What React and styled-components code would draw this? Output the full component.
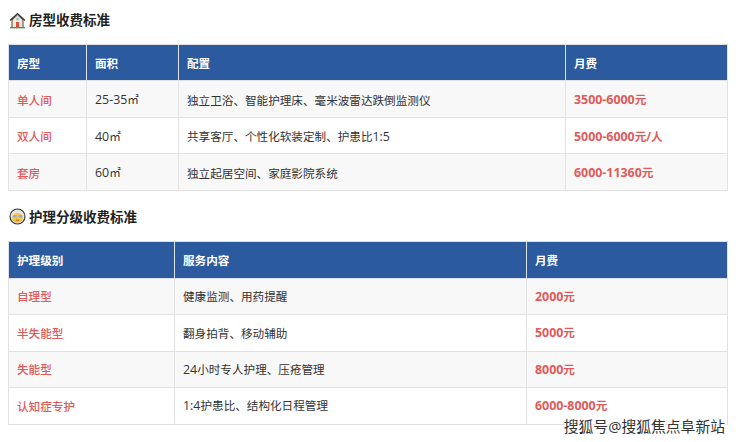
import React from "react";
import styled, { createGlobalStyle } from "styled-components";

const Global = createGlobalStyle`
  html, body { margin: 0; padding: 0; background: #fff; }
  body { font-family: "Open Sans", "Noto Sans CJK SC", sans-serif; }
`;
const Page = styled.div`
  position: relative;
  width: 740px;
  height: 442px;
  overflow: hidden;
  padding: 10px 12px 0 8px;
  box-sizing: border-box;
`;
const Heading = styled.h3`
  display: flex;
  align-items: center;
  gap: 3px;
  height: 20px;
  margin: 0 0 14px 1px;
  font-size: 13.5px;
  font-weight: 700;
  color: #222;
  line-height: 20px;
`;
const SecondHeading = styled(Heading)`
  margin-top: 16px;
  margin-bottom: 14px;
`;
const Table = styled.table`
  width: 719px;
  table-layout: fixed;
  border-collapse: collapse;
  font-size: 11.6px;
  color: #333;
`;
const Th = styled.th`
  height: ${(p) => p.$height}px;
  padding: 0 8px;
  box-sizing: border-box;
  background: #2b5a9e;
  border: 1px solid #dde1e6;
  color: #fff;
  font-weight: 700;
  text-align: left;
`;
const Row = styled.tr`
  background: ${(p) => (p.$odd ? "#f8f8f8" : "#fff")};
`;
const Td = styled.td`
  height: 36.5px;
  padding: ${(p) => p.$nudge}px 8px 0;
  box-sizing: border-box;
  border: 1px solid #e2e2e2;
  color: ${(p) => (p.$accent ? "#e05a5a" : "#333")};
  font-weight: ${(p) => p.$weight};
  white-space: nowrap;
`;
const Latin = styled.span`
  font-size: 12.4px;
`;
const Watermark = styled.div`
  position: absolute;
  right: 15px;
  bottom: 6px;
  font-size: 14.8px;
  line-height: 20px;
  color: #333;
  text-shadow: 1px 0 0 #fff, -1px 0 0 #fff, 0 1px 0 #fff, 0 -1px 0 #fff, 1px 1px 0 #fff, -1px -1px 0 #fff;
`;

const HouseIcon = () => (
  <svg width="17" height="17" viewBox="0 0 17 17" aria-hidden="true">
    <path d="M1 8.5 8.5 1.5 16 8.5" fill="#f4f1ec" stroke="#333" strokeWidth="1.2" />
    <path d="M3 8v7.5h11V8L8.5 3z" fill="#f6e7d8" stroke="#444" strokeWidth="1" />
    <rect x="7" y="10" width="3" height="5.5" fill="#d9503f" />
    <rect x="1" y="15" width="15" height="1.4" fill="#3f9e4d" />
    <circle cx="8.5" cy="7" r="1.2" fill="#6cb6e0" />
  </svg>
);
const GrannyIcon = () => (
  <svg width="17" height="17" viewBox="0 0 17 17" aria-hidden="true">
    <circle cx="8.5" cy="8.5" r="7.5" fill="#e9e6e0" stroke="#333" strokeWidth="1.1" />
    <ellipse cx="8.5" cy="10" rx="5.4" ry="5" fill="#f7c34b" />
    <rect x="3.6" y="7" width="4" height="2.6" rx="1" fill="#8fb2d8" />
    <rect x="9.4" y="7" width="4" height="2.6" rx="1" fill="#8fb2d8" />
    <path d="M6.8 12.2h3.4" stroke="#b5651d" strokeWidth="1" />
  </svg>
);

const rooms = [
  ["单人间", "25-35㎡", "独立卫浴、智能护理床、毫米波雷达跌倒监测仪", "3500-6000元"],
  ["双人间", "40㎡", "共享客厅、个性化软装定制、护患比1:5", "5000-6000元/人"],
  ["套房", "60㎡", "独立起居空间、家庭影院系统", "6000-11360元"],
];
const care = [
  ["自理型", "健康监测、用药提醒", "2000元"],
  ["半失能型", "翻身拍背、移动辅助", "5000元"],
  ["失能型", "24小时专人护理、压疮管理", "8000元"],
  ["认知症专护", "1:4护患比、结构化日程管理", "6000-8000元"],
];

const Mixed = ({ text }) =>
  text.split(/([0-9:\-]+)/).map((part, i) => (i % 2 ? <Latin key={i}>{part}</Latin> : part));

const PriceTable = ({ widths, head, rows, headHeight, nudge }) => (
  <Table>
    <colgroup>
      {widths.map((w) => (
        <col key={w} width={w} />
      ))}
    </colgroup>
    <thead>
      <tr>
        {head.map((h) => (
          <Th key={h} $height={headHeight}>
            {h}
          </Th>
        ))}
      </tr>
    </thead>
    <tbody>
      {rows.map((r, i) => (
        <Row key={r[0]} $odd={i % 2 === 0}>
          {r.map((c, j) => {
            const last = j === r.length - 1;
            return (
              <Td key={j} $nudge={nudge} $accent={j === 0 || last} $weight={last ? 700 : j === 0 ? 500 : 400}>
                <Mixed text={c} />
              </Td>
            );
          })}
        </Row>
      ))}
    </tbody>
  </Table>
);

export default function App() {
  return (
    <Page>
      <Global />
      <Heading>
        <HouseIcon />
        房型收费标准
      </Heading>
      <PriceTable widths={[78, 92, 387, 162]} head={["房型", "面积", "配置", "月费"]} rows={rooms} headHeight={36} nudge={2} />
      <SecondHeading>
        <GrannyIcon />
        护理分级收费标准
      </SecondHeading>
      <PriceTable widths={[166, 352, 201]} head={["护理级别", "服务内容", "月费"]} rows={care} headHeight={37} nudge={0} />
      <Watermark>搜狐号@搜狐焦点阜新站</Watermark>
    </Page>
  );
}
